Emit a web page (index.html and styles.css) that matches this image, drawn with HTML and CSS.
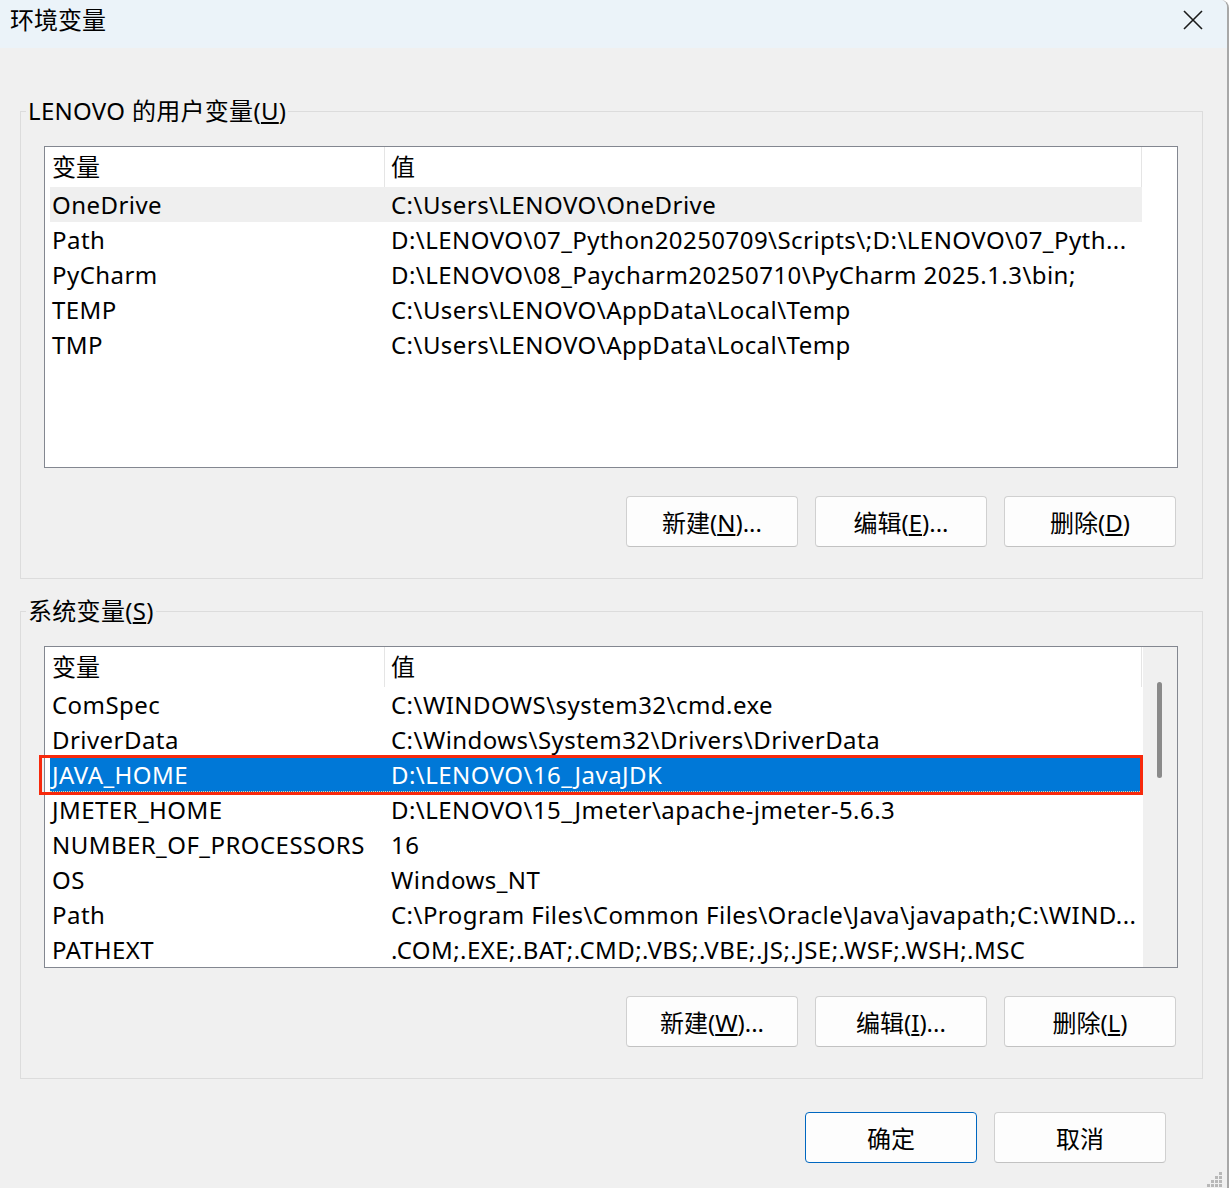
FILE: index.html
```html
<!DOCTYPE html>
<html lang="zh-CN">
<head>
    <meta charset="UTF-8">
    <title>环境变量</title>
    <link rel="stylesheet" href="styles.css">
</head>
<body>
    <div class="window">
        <div class="titlebar">
            <span class="title">环境变量</span>
            <svg class="close" width="20" height="20" viewBox="0 0 20 20">
                <path d="M1 1 L19 19 M19 1 L1 19" stroke="#1a1a1a" stroke-width="1.6" fill="none"/>
            </svg>
        </div>

        <div class="content">
            <!-- 用户变量 -->
            <fieldset class="group">
                <legend>LENOVO 的用户变量(<u>U</u>)</legend>
                <div class="list">
                    <div class="table">
                        <div class="row head">
                            <div class="name">变量</div>
                            <div class="value">值</div>
                        </div>
                        <div class="row hover">
                            <div class="name">OneDrive</div>
                            <div class="value">C:\Users\LENOVO\OneDrive</div>
                        </div>
                        <div class="row">
                            <div class="name">Path</div>
                            <div class="value">D:\LENOVO\07_Python20250709\Scripts\;D:\LENOVO\07_Pyth...</div>
                        </div>
                        <div class="row">
                            <div class="name">PyCharm</div>
                            <div class="value">D:\LENOVO\08_Paycharm20250710\PyCharm 2025.1.3\bin;</div>
                        </div>
                        <div class="row">
                            <div class="name">TEMP</div>
                            <div class="value">C:\Users\LENOVO\AppData\Local\Temp</div>
                        </div>
                        <div class="row">
                            <div class="name">TMP</div>
                            <div class="value">C:\Users\LENOVO\AppData\Local\Temp</div>
                        </div>
                    </div>
                </div>
                <div class="buttons">
                    <button>新建(<u>N</u>)...</button>
                    <button>编辑(<u>E</u>)...</button>
                    <button>删除(<u>D</u>)</button>
                </div>
            </fieldset>

            <!-- 系统变量 -->
            <fieldset class="group second">
                <legend>系统变量(<u>S</u>)</legend>
                <div class="list">
                    <div class="table">
                        <div class="row head">
                            <div class="name">变量</div>
                            <div class="value">值</div>
                        </div>
                        <div class="row">
                            <div class="name">ComSpec</div>
                            <div class="value">C:\WINDOWS\system32\cmd.exe</div>
                        </div>
                        <div class="row">
                            <div class="name">DriverData</div>
                            <div class="value">C:\Windows\System32\Drivers\DriverData</div>
                        </div>
                        <div class="row selected">
                            <div class="name">JAVA_HOME</div>
                            <div class="value">D:\LENOVO\16_JavaJDK</div>
                        </div>
                        <div class="row">
                            <div class="name">JMETER_HOME</div>
                            <div class="value">D:\LENOVO\15_Jmeter\apache-jmeter-5.6.3</div>
                        </div>
                        <div class="row">
                            <div class="name">NUMBER_OF_PROCESSORS</div>
                            <div class="value">16</div>
                        </div>
                        <div class="row">
                            <div class="name">OS</div>
                            <div class="value">Windows_NT</div>
                        </div>
                        <div class="row">
                            <div class="name">Path</div>
                            <div class="value">C:\Program Files\Common Files\Oracle\Java\javapath;C:\WIND...</div>
                        </div>
                        <div class="row">
                            <div class="name">PATHEXT</div>
                            <div class="value">.COM;.EXE;.BAT;.CMD;.VBS;.VBE;.JS;.JSE;.WSF;.WSH;.MSC</div>
                        </div>
                    </div>
                    <div class="scrollbar">
                        <div class="thumb"></div>
                    </div>
                </div>
                <div class="buttons">
                    <button>新建(<u>W</u>)...</button>
                    <button>编辑(<u>I</u>)...</button>
                    <button>删除(<u>L</u>)</button>
                </div>
            </fieldset>

            <div class="footer">
                <button class="default">确定</button>
                <button>取消</button>
            </div>
        </div>

        <svg class="grip" width="16" height="16" viewBox="0 0 16 16">
            <g fill="#b8b8b8">
                <rect x="12" y="0" width="3" height="3"/>
                <rect x="8" y="4" width="3" height="3"/>
                <rect x="12" y="4" width="3" height="3"/>
                <rect x="4" y="8" width="3" height="3"/>
                <rect x="8" y="8" width="3" height="3"/>
                <rect x="12" y="8" width="3" height="3"/>
                <rect x="0" y="12" width="3" height="3"/>
                <rect x="4" y="12" width="3" height="3"/>
                <rect x="8" y="12" width="3" height="3"/>
                <rect x="12" y="12" width="3" height="3"/>
            </g>
        </svg>
    </div>
</body>
</html>
```

FILE: styles.css
```css
body {
    margin: 0;
    padding: 0;
    background-color: #ffffff;
    font-family: "Noto Sans", "Noto Sans CJK SC", sans-serif;
    font-size: 24px;
    color: #000;
}

.window {
    position: relative;
    width: 1227px;
    height: 1188px;
    background-color: #f0f0f0;
    border-right: 2px solid #a8a8a8;
    border-top-right-radius: 8px;
    overflow: hidden;
}

.titlebar {
    height: 48px;
    background-color: #ebf3f9;
    display: flex;
    align-items: flex-start;
    justify-content: space-between;
    padding: 0 24px 0 10px;
}

.title {
    line-height: 40px;
}

.close {
    margin-top: 10px;
}

.content {
    padding: 48px 0 0 20px;
}

.group {
    box-sizing: border-box;
    width: 1183px;
    margin: 0;
    padding: 20px 24px 31px 8px;
    border: 1px solid #dcdcdc;
}

.group.second {
    margin-top: 17px;
}

.group legend {
    margin-left: -3px;
    padding: 0 2px;
    line-height: 30px;
    letter-spacing: 0.3px;
}

.list {
    box-sizing: border-box;
    display: flex;
    width: 1134px;
    height: 322px;
    margin-left: 15px;
    border: 1px solid #838790;
    background-color: #fff;
}

.table {
    width: 1092px;
    margin-left: 5px;
}

.row {
    position: relative;
    display: grid;
    grid-template-columns: 335px 1fr;
    height: 35px;
    line-height: 35px;
    white-space: nowrap;
    letter-spacing: 0.45px;
}

.row .name {
    padding-left: 2px;
}

.row .value {
    padding-left: 6px;
}

.row.head {
    height: 40px;
    line-height: 40px;
    letter-spacing: 0;
}

.row.head .name {
    border-right: 1px solid #e5e5e5;
}

.row.head .value {
    border-right: 1px solid #e5e5e5;
}

.row.hover {
    background-color: #efefef;
}

.row.selected {
    background-color: #0078d7;
    color: #fff;
    box-sizing: border-box;
    border-bottom: 1px dotted #e9d7a4;
}

/* 红色标注框 */
.row.selected::after {
    content: "";
    position: absolute;
    left: -11px;
    top: -2px;
    right: -1px;
    bottom: -4px;
    border: 3px solid #f7290c;
}

.scrollbar {
    flex: 1;
    margin-left: 1px;
    padding-top: 35px;
    background-color: #f0f0f0;
}

.thumb {
    width: 5px;
    height: 96px;
    margin-left: 14px;
    border-radius: 3px;
    background-color: #8a8a8a;
}

.buttons {
    display: flex;
    justify-content: flex-end;
    gap: 17px;
    margin-top: 28px;
    padding-right: 2px;
}

button {
    box-sizing: border-box;
    width: 172px;
    height: 51px;
    padding: 0;
    font-family: inherit;
    font-size: 24px;
    color: #000;
    background-color: #fdfdfd;
    border: 1px solid #d0d0d0;
    border-bottom-color: #c2c2c2;
    border-radius: 4px;
}

button.default {
    border: 1px solid #0067c0;
}

.footer {
    display: flex;
    justify-content: flex-end;
    gap: 17px;
    width: 1183px;
    box-sizing: border-box;
    margin-top: 33px;
    padding-right: 37px;
}

.grip {
    position: absolute;
    right: 4px;
    bottom: 0;
}
```
